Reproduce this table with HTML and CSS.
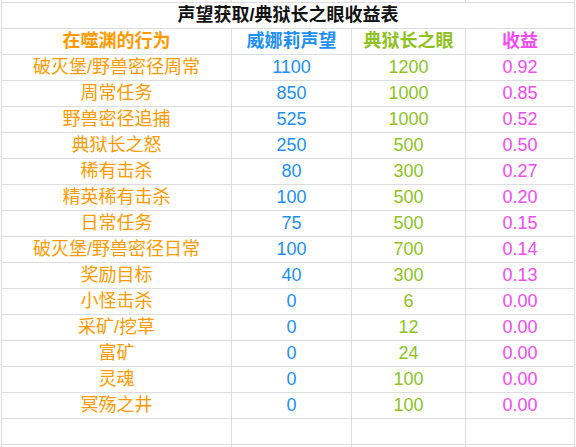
FILE: index.html
```html
<!DOCTYPE html>
<html lang="zh">
<head>
<meta charset="utf-8">
<title>声望获取/典狱长之眼收益表</title>
<link rel="stylesheet" href="styles.css">
</head>
<body>
<div class="sheet">
  <div class="cell"></div><div class="cell"></div><div class="cell"></div><div class="cell"></div>
  <div class="cell title">声望获取/典狱长之眼收益表</div>
  <div class="cell head c1">在噬渊的行为</div>
  <div class="cell head c2">威娜莉声望</div>
  <div class="cell head c3">典狱长之眼</div>
  <div class="cell head c4">收益</div>

  <div class="cell c1">破灭堡/野兽密径周常</div><div class="cell c2">1100</div><div class="cell c3">1200</div><div class="cell c4">0.92</div>
  <div class="cell c1">周常任务</div><div class="cell c2">850</div><div class="cell c3">1000</div><div class="cell c4">0.85</div>
  <div class="cell c1">野兽密径追捕</div><div class="cell c2">525</div><div class="cell c3">1000</div><div class="cell c4">0.52</div>
  <div class="cell c1">典狱长之怒</div><div class="cell c2">250</div><div class="cell c3">500</div><div class="cell c4">0.50</div>
  <div class="cell c1">稀有击杀</div><div class="cell c2">80</div><div class="cell c3">300</div><div class="cell c4">0.27</div>
  <div class="cell c1">精英稀有击杀</div><div class="cell c2">100</div><div class="cell c3">500</div><div class="cell c4">0.20</div>
  <div class="cell c1">日常任务</div><div class="cell c2">75</div><div class="cell c3">500</div><div class="cell c4">0.15</div>
  <div class="cell c1">破灭堡/野兽密径日常</div><div class="cell c2">100</div><div class="cell c3">700</div><div class="cell c4">0.14</div>
  <div class="cell c1">奖励目标</div><div class="cell c2">40</div><div class="cell c3">300</div><div class="cell c4">0.13</div>
  <div class="cell c1">小怪击杀</div><div class="cell c2">0</div><div class="cell c3">6</div><div class="cell c4">0.00</div>
  <div class="cell c1">采矿/挖草</div><div class="cell c2">0</div><div class="cell c3">12</div><div class="cell c4">0.00</div>
  <div class="cell c1">富矿</div><div class="cell c2">0</div><div class="cell c3">24</div><div class="cell c4">0.00</div>
  <div class="cell c1">灵魂</div><div class="cell c2">0</div><div class="cell c3">100</div><div class="cell c4">0.00</div>
  <div class="cell c1">冥殇之井</div><div class="cell c2">0</div><div class="cell c3">100</div><div class="cell c4">0.00</div>

  <div class="cell"></div><div class="cell"></div><div class="cell"></div><div class="cell"></div>
  <div class="cell"></div><div class="cell"></div><div class="cell"></div><div class="cell"></div>
</div>
</body>
</html>
```

FILE: styles.css
```css
html, body {
  margin: 0;
  padding: 0;
  background: #ffffff;
  overflow: hidden;
}

body {
  font-family: "Liberation Sans", "Noto Sans CJK SC", sans-serif;
  font-size: 18px;
}

.sheet {
  display: grid;
  grid-template-columns: 229px 119px 113px 108px;
  grid-template-rows: 2px repeat(17, 25px) 2px;
  gap: 1px;
  padding: 0 1px;
  margin-left: 1px;
  width: max-content;
  background: #dcdde1;
}

.cell {
  background: #ffffff;
  text-align: center;
  line-height: 25px;
  white-space: nowrap;
  overflow: hidden;
}

.title {
  grid-column: 1 / -1;
  font-weight: bold;
  color: #111111;
}

.head {
  font-weight: bold;
}

.c1 { color: #ff9a00; }
.c2 { color: #1e8ff5; }
.c3 { color: #8ec21f; }
.c4 { color: #f04cf0; }
```
